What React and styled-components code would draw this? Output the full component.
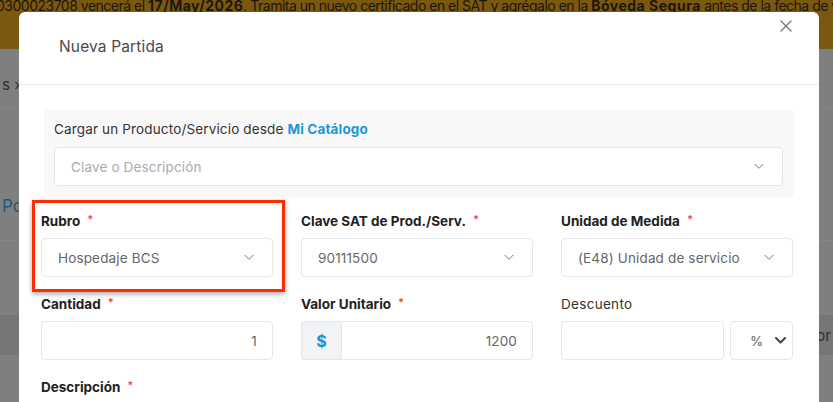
import React from "react";
import styled, { createGlobalStyle } from "styled-components";

const GlobalStyle = createGlobalStyle`
  html, body {
    margin: 0;
    padding: 0;
    background: #7f7f7f;
    font-family: Inter, "Open Sans", sans-serif;
    overflow: hidden;
  }
  * { box-sizing: border-box; }
`;

const Page = styled.div`
  position: relative;
  width: 833px;
  height: 402px;
  overflow: hidden;
`;

const Banner = styled.div`
  height: 49px;
  background: #7b5810;
  color: #1d1709;
  font-size: 14px;
  letter-spacing: -0.5px;
  white-space: nowrap;
  overflow: hidden;
  line-height: 20px;
  p {
    margin: -4px 0 0 -4px;
  }
  b {
    font-weight: 700;
    letter-spacing: 0.5px;
  }
`;

const BgBand = styled.div`
  height: ${(p) => p.h}px;
  background: ${(p) => (p.dark ? "#767676" : "#7f7f7f")};
  border-top: ${(p) => (p.line ? "1px solid #878787" : "none")};
  display: flex;
  align-items: ${(p) => p.align || "center"};
  justify-content: space-between;
  font-size: 15px;
  color: #2e2e2e;
  padding: 0 2px ${(p) => p.pb || 0}px;
`;

const BgLink = styled.span`
  color: #1f5878;
  font-size: 17px;
`;

const Modal = styled.div`
  position: absolute;
  left: 19px;
  top: 12px;
  width: 800px;
  height: 420px;
  background: #fff;
  border-radius: 6px;
  letter-spacing: 0.15px;
`;

const Header = styled.div`
  position: relative;
  height: 73px;
  border-bottom: 1px solid #e8e9ee;
  padding: 24px 40px 0;
`;

const Title = styled.h5`
  margin: 0;
  font-size: 15.5px;
  font-weight: 400;
  line-height: 22px;
  color: #4a4a4a;
`;

const Close = styled.button`
  position: absolute;
  right: 26px;
  top: 7px;
  width: 14px;
  height: 14px;
  padding: 0;
  border: 0;
  background: none;
  display: flex;
  align-items: center;
  justify-content: center;
`;

const Body = styled.div`
  padding: 25px 25px 0 22px;
`;

const CatalogBox = styled.div`
  margin-left: 3px;
  background: #f8f8f9;
  padding: 9px 11px 11px 10px;
`;

const CatalogTitle = styled.div`
  font-size: 13.5px;
  line-height: 20px;
  color: #333;
  margin-bottom: 8px;
  a {
    color: #1a98d5;
    font-weight: 700;
    text-decoration: none;
  }
`;

const Grid = styled.div`
  display: grid;
  grid-template-columns: repeat(3, 232px);
  column-gap: 28px;
  margin-top: ${(p) => p.mt || 0}px;
`;

const Field = styled.div`
  display: flex;
  flex-direction: column;
`;

const Label = styled.label`
  font-size: 13.5px;
  line-height: 20px;
  font-weight: ${(p) => (p.plain ? 400 : 700)};
  letter-spacing: ${(p) => (p.plain ? 0.3 : 0)}px;
  color: ${(p) => (p.plain ? "#333" : "#222")};
  margin-bottom: 7px;
  display: flex;
  align-items: center;
`;

const Req = styled.span`
  color: #ef4b4b;
  font-size: 11px;
  line-height: 14px;
  margin: -4px 0 0 7px;
`;

const Box = styled.div`
  height: 39px;
  border: 1px solid #e4e6eb;
  border-radius: 4px;
  background: #fff;
  display: flex;
  align-items: center;
  justify-content: ${(p) => (p.right ? "flex-end" : "space-between")};
  padding: 0 ${(p) => p.pr || (p.right ? 15 : 18)}px 0 ${(p) => p.pl || 16}px;
  font-size: 13.5px;
  color: ${(p) => (p.placeholder ? "#aaaaaf" : "#666")};
  flex: ${(p) => p.flex || "none"};
  width: ${(p) => (p.w ? `${p.w}px` : "auto")};
`;

const Group = styled.div`
  display: flex;
  gap: ${(p) => p.gap || 0}px;
`;

const Addon = styled.div`
  width: 40px;
  height: 39px;
  background: #f2f3f7;
  border: 1px solid #e4e6eb;
  border-right: 0;
  border-radius: 4px 0 0 4px;
  display: flex;
  align-items: center;
  justify-content: center;
  color: #1a96d4;
  font-weight: 700;
  font-size: 16px;
`;

const Highlight = styled.div`
  position: absolute;
  left: 13px;
  top: 188px;
  width: 253px;
  height: 92px;
  border: 3px solid #ff2a00;
  box-shadow: 0 2px 5px rgba(0, 0, 0, 0.35);
  pointer-events: none;
`;

const Chevron = ({ bold }) => (
  <svg width={bold ? 11 : 10} height="7" viewBox="0 0 11 7" fill="none">
    <path
      d="M1 1l4.5 4.5L10 1"
      stroke={bold ? "#444" : "#777"}
      strokeWidth={bold ? 2 : 1.1}
      strokeLinecap="round"
      strokeLinejoin="round"
    />
  </svg>
);

const Select = ({ children, placeholder }) => (
  <Box placeholder={placeholder}>
    <span>{children}</span>
    <Chevron />
  </Box>
);

const App = () => {
  return (
    <Page>
      <GlobalStyle />
      <Banner>
        <p>
          0300023708 vencerá el <b>17/May/2026</b>. Tramita un nuevo certificado
          en el SAT y agrégalo en la <b>Bóveda Segura</b> antes de la fecha de
          vencimiento.
        </p>
      </Banner>
      <BgBand h={59} align="flex-end" pb={14}>
        <span>s ›</span>
      </BgBand>
      <BgBand h={132} line align="flex-end" pb={24}>
        <BgLink>Po</BgLink>
      </BgBand>
      <BgBand h={75} line />
      <BgBand h={40} dark>
        <span />
        <span>or</span>
      </BgBand>
      <BgBand h={47} />

      <Modal>
        <Header>
          <Title>Nueva Partida</Title>
          <Close aria-label="Cerrar">
            <svg width="12" height="12" viewBox="0 0 12 12">
              <path
                d="M1 1l10 10M11 1L1 11"
                stroke="#777"
                strokeWidth="1.4"
                strokeLinecap="round"
              />
            </svg>
          </Close>
        </Header>
        <Body>
          <CatalogBox>
            <CatalogTitle>
              Cargar un Producto/Servicio desde <a href="#">Mi Catálogo</a>
            </CatalogTitle>
            <Select placeholder>Clave o Descripción</Select>
          </CatalogBox>

          <Grid mt={14}>
            <Field>
              <Label>
                Rubro<Req>*</Req>
              </Label>
              <Select>Hospedaje BCS</Select>
            </Field>
            <Field>
              <Label>
                Clave SAT de Prod./Serv.<Req>*</Req>
              </Label>
              <Select>90111500</Select>
            </Field>
            <Field>
              <Label>
                Unidad de Medida<Req>*</Req>
              </Label>
              <Select>(E48) Unidad de servicio</Select>
            </Field>
          </Grid>

          <Grid mt={17}>
            <Field>
              <Label>
                Cantidad<Req>*</Req>
              </Label>
              <Box right>1</Box>
            </Field>
            <Field>
              <Label>
                Valor Unitario<Req>*</Req>
              </Label>
              <Group>
                <Addon>$</Addon>
                <Box right flex="1" style={{ borderRadius: "0 4px 4px 0" }}>
                  1200
                </Box>
              </Group>
            </Field>
            <Field>
              <Label plain>Descuento</Label>
              <Group gap={6}>
                <Box flex="1" />
                <Box w={63} pl={19} pr={6}>
                  <span>%</span>
                  <Chevron bold />
                </Box>
              </Group>
            </Field>
          </Grid>

          <Grid mt={17}>
            <Field>
              <Label>
                Descripción<Req>*</Req>
              </Label>
            </Field>
          </Grid>
        </Body>
        <Highlight />
      </Modal>
    </Page>
  );
};

export default App;
